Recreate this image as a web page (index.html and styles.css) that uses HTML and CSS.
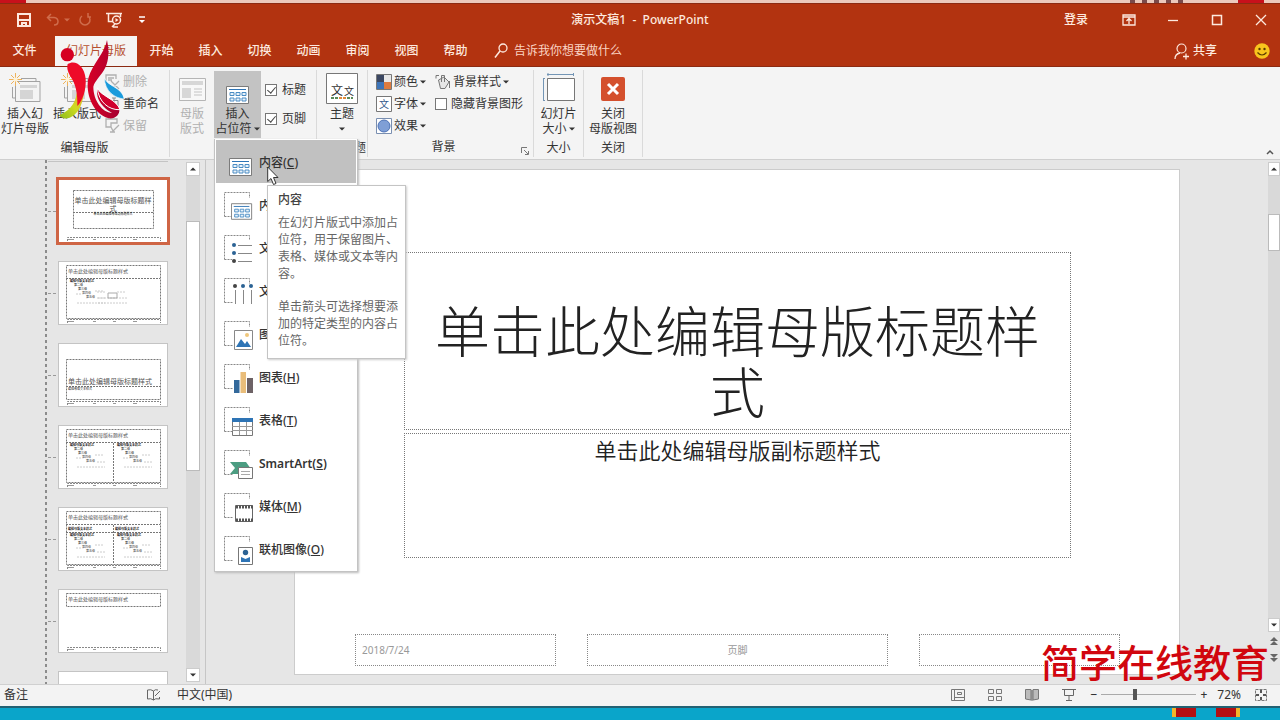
FILE: index.html
```html
<!DOCTYPE html>
<html lang="zh-CN">
<head>
<meta charset="utf-8">
<title>演示文稿1 - PowerPoint</title>
<link rel="stylesheet" href="styles.css">
</head>
<body>
<svg class="defs" aria-hidden="true">
  <symbol id="frame" viewBox="0 0 32 32"><path d="M3.500 26.500V2.500H28.500V8M3.500 26.500H12" fill="none" stroke="#888" stroke-dasharray="2 1"/></symbol>
  <symbol id="content" viewBox="0 0 24 20">
    <path d="M.5 1.500H22.500V18.500H.5Z" fill="#fff" stroke="#7b7b7b"/>
    <path d="M3 4.500H20" stroke="#2e74b5"/>
    <path d="M4 7.500h4v3h-4zM10 7.500h4v3h-4zM16 7.500h4v3h-4zM4 13h4v3h-4zM10 13h4v3h-4zM16 13h4v3h-4z" fill="#e8f2fa" stroke="#4a8cc4"/>
  </symbol>
  <symbol id="slides" viewBox="0 0 32 32">
    <path d="M8 8.500H31V28.500H6.500V12M27 8.500V5.500H12M6.500 25H3.500V14" fill="none" stroke="#a3a3a3"/>
    <path d="M11 12H28V15H11zM11 17H24V26H11z" fill="#d5d5d5"/>
    <path d="M6.500 0V13M0 6.500H13M2 2L11 11M11 2L2 11" stroke="#eeb35b"/><circle cx="6.500" cy="6.500" r="2" fill="#fff3d5"/>
  </symbol>
  <symbol id="caret" viewBox="0 0 6 4"><path d="M0 .5H6L3 3.500Z" fill="currentColor"/></symbol>
  <symbol id="foot" viewBox="0 0 110 64">
    <path d="M9.500 62V58.500H102.500V62" fill="none" stroke="#888" stroke-dasharray="2 1"/>
    <path d="M10 60.500H16M35 60.500H38M55 60.500H58M75 60.500H79" stroke="#999"/>
  </symbol>
  <symbol id="levels" viewBox="0 0 50 30">
    <text x="3" y="5" font-size="3" fill="#111" font-weight="700">编辑母版文本样式</text>
    <text x="7" y="9" font-size="3" fill="#222">第二级</text><text x="11" y="13" font-size="3" fill="#222">第三级</text>
    <text x="15" y="17" font-size="3" fill="#555">第四级</text><text x="19" y="21" font-size="3" fill="#444">第五级</text>
    <path d="M9 17H14M28 14H36M10 26H38M30 21H38" stroke="#ccc" stroke-dasharray="2 1"/>
  </symbol>
</svg>

<div class="app">
  <div class="backdrop-top" aria-hidden="true"><i class="blob"></i><i class="marks"></i><i class="blob"></i></div>

  <header class="titlebar">
    <div class="quick">
      <button aria-label="保存"><svg width="14" height="14" viewBox="0 0 14 14"><path d="M1 1H13V13H1ZM1 7H13M5 13V10H9V13" fill="none" stroke="#fde9df" stroke-width="2"/></svg></button>
      <button class="dim undo" aria-label="撤消"><svg width="14" height="14" viewBox="0 0 14 14"><path d="M5 1L1.500 4.500L5 8M2 4.500H8Q12 5 12 8.500T8 12" fill="none" stroke="currentColor" stroke-width="1.500"/></svg><svg width="6" height="4"><use href="#caret"/></svg></button>
      <button class="dim" aria-label="重复"><svg width="14" height="14" viewBox="0 0 14 14"><path d="M4 3A5 5 0 1 0 10 3M10 0V4H13" fill="none" stroke="currentColor" stroke-width="1.500"/></svg></button>
      <button class="show" aria-label="从头开始"><svg width="17" height="16" viewBox="0 0 17 16"><path d="M0 1.500H16M2.500 2V9.500H7M14.500 2V5M6 15L9 12M7 15H12" fill="none" stroke="#fde9df" stroke-width="1.500"/><circle cx="10.500" cy="8" r="4" fill="none" stroke="#fde9df" stroke-width="1.500"/><path d="M9.500 6L12.500 8L9.500 10Z" fill="#fde9df"/></svg></button>
      <button class="more" aria-label="自定义快速访问工具栏"><svg width="6" height="8" viewBox="0 0 6 8"><path d="M0 1H6" stroke="#fff" stroke-width="1.500"/><path d="M0 4H6L3 7Z" fill="#fff"/></svg></button>
    </div>
    <div class="doc-title">演示文稿1 &nbsp;-&nbsp; PowerPoint</div>
    <div class="window-tools">
      <button>登录</button>
      <button aria-label="功能区显示选项"><svg width="14" height="12" viewBox="0 0 14 12"><path d="M1 1H13V11H1ZM1 3H13M7 10V5M4.500 7L7 4.500L9.500 7" fill="none" stroke="#fde9df" stroke-width="1.300"/></svg></button>
      <button aria-label="最小化"><svg width="12" height="12" viewBox="0 0 12 12"><path d="M1 6.500H11" stroke="#fde9df" stroke-width="1.300"/></svg></button>
      <button aria-label="最大化"><svg width="12" height="12" viewBox="0 0 12 12"><path d="M1.500 1.500H10.500V10.500H1.500Z" fill="none" stroke="#fde9df" stroke-width="1.500"/></svg></button>
      <button aria-label="关闭窗口"><svg width="12" height="12" viewBox="0 0 12 12"><path d="M1 1L11 11M11 1L1 11" stroke="#fde9df" stroke-width="1.300"/></svg></button>
    </div>
  </header>

  <nav class="tabs">
    <button class="file">文件</button><button class="active">幻灯片母版</button><button>开始</button><button>插入</button><button>切换</button><button>动画</button><button>审阅</button><button>视图</button><button>帮助</button>
    <label class="tell"><svg width="14" height="16" viewBox="0 0 14 16"><circle cx="9" cy="5" r="4" fill="none" stroke="currentColor" stroke-width="1.300"/><path d="M6 8L1 14.500" stroke="currentColor" stroke-width="1.500"/></svg><input type="text" placeholder="告诉我你想要做什么" aria-label="告诉我你想要做什么"></label>
    <button class="share"><svg width="16" height="17" viewBox="0 0 16 17"><circle cx="7.500" cy="5.500" r="4.500" fill="none" stroke="currentColor" stroke-width="1.200"/><path d="M1 16Q1 11 6 10M9 13.500H15M12 10.500V16.500" fill="none" stroke="currentColor" stroke-width="1.300"/></svg>共享</button>
    <button class="smile" aria-label="反馈"><svg width="16" height="16" viewBox="0 0 16 16"><circle cx="8" cy="8" r="7.700" fill="#f8c51d"/><circle cx="5.500" cy="6" r="1.200" fill="#5b3c00"/><circle cx="10.500" cy="6" r="1.200" fill="#5b3c00"/><path d="M3.500 9.500Q8 14.500 12.500 9.500" fill="none" stroke="#5b3c00" stroke-width="1.200"/></svg></button>
  </nav>

  <section class="ribbon" aria-label="幻灯片母版">
    <div class="group edit">
      <div class="tools">
        <button class="big"><svg width="32" height="32"><use href="#slides"/></svg>插入幻<br>灯片母版</button>
        <button class="big"><svg width="32" height="32"><use href="#slides"/></svg>插入版式</button>
        <div class="stack">
          <button class="row off"><svg width="16" height="16" viewBox="0 0 16 16"><path d="M1 9V1H11V5M3 4H9M3 6H7M6 7L14 15M14 7L6 15" fill="none" stroke="currentColor" stroke-width="1.300"/></svg>删除</button>
          <button class="row"><svg width="16" height="16" viewBox="0 0 16 16"><path d="M1 4.500H13V12.500H1ZM9 2V15M7 2H11M7 15H11" fill="none" stroke="#888"/></svg>重命名</button>
          <button class="row off"><svg width="16" height="16" viewBox="0 0 16 16"><path d="M1 9V1H12V5H6V9ZM8 13L6 9M8 13L14 7M5 14H10" fill="none" stroke="currentColor" stroke-width="1.300"/></svg>保留</button>
        </div>
      </div>
      <h2>编辑母版</h2>
    </div>
    <div class="group layout">
      <div class="tools">
        <button class="big off"><svg width="30" height="32" viewBox="0 0 30 32"><path d="M2.500 5.500H28.500V27.500H2.500Z" fill="#f8f8f8" stroke="#b5b5b5"/><path d="M5 8H26V12H5zM5 15H14V25H5z" fill="#d7d7d7"/><path d="M17 16H25M17 19H25M17 22H25" stroke="#c4c4c4"/></svg>母版<br>版式</button>
        <div class="drop">
          <button class="big pressed" aria-expanded="true"><svg width="24" height="32" viewBox="0 0 24 32"><use href="#content" y="12" width="24" height="20"/></svg>插入<br>占位符 <svg class="car" width="6" height="4"><use href="#caret"/></svg></button>
          <div class="menu" role="menu">
            <button role="menuitem" class="hover"><svg width="30" height="32"><use href="#content" x="6" y="10" width="24" height="20"/></svg><span>内容(<u>C</u>)</span></button>
            <button role="menuitem"><svg width="30" height="32" viewBox="2 0 30 32"><use href="#frame" width="32" height="32"/><use href="#content" x="10" y="12" width="22" height="19"/></svg><span>内</span></button>
            <button role="menuitem"><svg width="30" height="32" viewBox="2 0 30 32"><use href="#frame" width="32" height="32"/><path d="M11 7H32V31H11Z" fill="#fff"/><path d="M17 12.500H31M17 20.500H31M17 28.500H31" stroke="#888"/><circle cx="13" cy="12" r="2" fill="#2b6294"/><circle cx="13" cy="20" r="2" fill="#2b6294"/><circle cx="13" cy="28" r="2" fill="#444"/></svg><span>文</span></button>
            <button role="menuitem"><svg width="30" height="32" viewBox="2 0 30 32"><use href="#frame" width="32" height="32"/><path d="M14.500 14V28M22.500 14V28M30.500 14V28" stroke="#888"/><circle cx="14" cy="10" r="2" fill="#444"/><circle cx="22" cy="10" r="2" fill="#2b6294"/><circle cx="30" cy="10" r="2" fill="#2b6294"/></svg><span>文</span></button>
            <button role="menuitem"><svg width="30" height="32" viewBox="2 0 30 32"><use href="#frame" width="32" height="32"/><path d="M13.500 11.500H31.500V30.500H13.500Z" fill="#fff" stroke="#888"/><path d="M15 28L20 20L24 25L26 22L30 28Z" fill="#2e74b5"/><circle cx="26" cy="16" r="2" fill="#efc77c"/></svg><span>图</span></button>
            <button role="menuitem"><svg width="30" height="32" viewBox="2 0 30 32"><use href="#frame" width="32" height="32"/><path d="M13 18H18.500V31H13z" fill="#33699b"/><path d="M19.500 10H25V31H19.500z" fill="#e9bd7a"/><path d="M26 16H32V31H26z" fill="#6d6266"/></svg><span>图表(<u>H</u>)</span></button>
            <button role="menuitem"><svg width="30" height="32" viewBox="2 0 30 32"><use href="#frame" width="32" height="32"/><path d="M11.500 13.500H31.500V30.500H11.500Z" fill="#fff" stroke="#777"/><path d="M11 13H32V17H11z" fill="#2e74b5"/><path d="M11 21.500H32M11 25.500H32M18.500 17V30M25.500 17V30" stroke="#999"/></svg><span>表格(<u>T</u>)</span></button>
            <button role="menuitem" class="latin"><svg width="30" height="32" viewBox="2 0 30 32"><use href="#frame" width="32" height="32"/><path d="M9 14H25L30 21L25 26H9L14 20Z" fill="#4c9d82"/><path d="M17.500 19.500H31.500V30.500H17.500Z" fill="#fff" stroke="#777"/><path d="M20 23.500H29M20 26.500H29" stroke="#aaa"/></svg><span>SmartArt(<u>S</u>)</span></button>
            <button role="menuitem"><svg width="30" height="32" viewBox="2 0 30 32"><use href="#frame" width="32" height="32"/><path d="M14.500 14.500H31.500V30.500H14.500Z" fill="#fff" stroke="#666"/><path d="M15 16H32M15 29H32" stroke="#555" stroke-width="3" stroke-dasharray="2 1"/></svg><span>媒体(<u>M</u>)</span></button>
            <button role="menuitem"><svg width="30" height="32" viewBox="2 0 30 32"><use href="#frame" width="32" height="32"/><path d="M17.500 13.500H31.500V30.500H17.500Z" fill="#fff" stroke="#777"/><circle cx="24.500" cy="18.500" r="2.700" fill="#2b6294"/><path d="M20 23L24.500 25L29 23V28H20Z" fill="#2e74b5"/></svg><span>联机图像(<u>O</u>)</span></button>
            <div class="tip" role="tooltip"><strong>内容</strong><p>在幻灯片版式中添加占位符，用于保留图片、表格、媒体或文本等内容。</p><p>单击箭头可选择想要添加的特定类型的内容占位符。</p></div>
            <svg class="cursor" width="12" height="20" viewBox="0 0 12 20"><path d="M.7 1V15.500L4 12.500L6.500 18.500L9 17.500L6.500 11.500H11Z" fill="#fff" stroke="#333"/></svg>
          </div>
        </div>
        <div class="checks">
          <label><input type="checkbox" checked>标题</label>
          <label><input type="checkbox" checked>页脚</label>
        </div>
      </div>
    </div>
    <div class="group theme">
      <div class="tools"><button class="big"><svg width="32" height="32" viewBox="0 0 32 32"><path d="M.5 .5H31.500V30.500H.5Z" fill="#fff" stroke="#777"/><text x="5" y="22" font-size="12" fill="#333">文</text><text x="18" y="22" font-size="10" fill="#333">文</text><path d="M5 25H27" stroke="#5a8a5a" stroke-width="2" stroke-dasharray="3 1"/><path d="M13 25H20" stroke="#e08a3a" stroke-width="2" stroke-dasharray="3 1"/></svg>主题<br><svg class="car" width="6" height="4"><use href="#caret"/></svg></button></div>
      <h2>编辑主题</h2>
    </div>
    <div class="group background">
      <div class="tools">
        <div class="stack">
          <button class="row"><svg width="16" height="16" viewBox="0 0 16 16"><path d="M1 1H8V8H1z" fill="#3b4762"/><path d="M8 1H15V8H8z" fill="#e8e8e8"/><path d="M1 8H8V15H1z" fill="#3d74b8"/><path d="M8 8H15V15H8z" fill="#dd7b3f"/><path d="M.5 .5H15.500V15.500H.5Z" fill="none" stroke="#777"/></svg>颜色<svg class="car" width="6" height="4"><use href="#caret"/></svg></button>
          <button class="row"><svg width="16" height="16" viewBox="0 0 16 16"><path d="M.5 .5H15.500V15.500H.5Z" fill="#fff" stroke="#777"/><text x="3" y="12" font-size="10" fill="#335a8c">文</text></svg>字体<svg class="car" width="6" height="4"><use href="#caret"/></svg></button>
          <button class="row"><svg width="16" height="16" viewBox="0 0 16 16"><path d="M.5 .5H15.500V15.500H.5Z" fill="#fff" stroke="#7a8fb0"/><circle cx="8" cy="8" r="6" fill="#7f9fd6" stroke="#4c71b5"/></svg>效果<svg class="car" width="6" height="4"><use href="#caret"/></svg></button>
        </div>
        <div class="stack">
          <button class="row"><svg width="16" height="16" viewBox="0 0 16 16"><path d="M3.500 6L9 3L14 8L10 14.500H5.500Z" fill="#e6e6e6" stroke="#777"/><path d="M6.500 8V1.500H9.500V8M1 4.500V1.500H4M14.500 7V14" fill="none" stroke="#777"/></svg>背景样式<svg class="car" width="6" height="4"><use href="#caret"/></svg></button>
          <label class="row"><input type="checkbox">隐藏背景图形</label>
        </div>
      </div>
      <h2>背景</h2>
      <button class="launcher" aria-label="背景格式"><svg width="8" height="8" viewBox="0 0 8 8"><path d="M.5 6V.5H6M3 3L7 7M7.500 4V7.500H4" fill="none" stroke="#777"/></svg></button>
    </div>
    <div class="group size">
      <div class="tools"><button class="big"><svg width="32" height="32" viewBox="0 0 32 32"><path d="M4.500 5.500H31.500V27.500H4.500Z" fill="#fff" stroke="#777"/><path d="M4 1.500H31M5 0V3M30.500 0V3M.5 6V27M0 5.500H2M0 27.500H2" stroke="#7395b5"/></svg>幻灯片<br>大小 <svg class="car" width="6" height="4"><use href="#caret"/></svg></button></div>
      <h2>大小</h2>
    </div>
    <div class="group close">
      <div class="tools"><button class="big"><svg width="24" height="32" viewBox="0 0 24 32"><rect y="4" width="24" height="24" rx="2" fill="#d4502d"/><path d="M7 11L17 21M17 11L7 21" stroke="#fff" stroke-width="3"/></svg>关闭<br>母版视图</button></div>
      <h2>关闭</h2>
    </div>
    <button class="collapse" aria-label="折叠功能区"><svg width="8" height="6" viewBox="0 0 8 6"><path d="M1 5L4 2L7 5" fill="none" stroke="#555" stroke-width="1.500"/></svg></button>
  </section>

  <main class="work">
    <aside class="thumbs">
      <div class="list">
        <div class="master"></div>
        <button class="thumb selected" aria-label="标题幻灯片 版式"><svg viewBox="0 0 110 64"><path d="M15.500 11.500H95.500V49.500H15.500ZM15 33.500H96" fill="none" stroke="#777" stroke-dasharray="2 1"/><text x="55" y="24" font-size="7" text-anchor="middle" fill="#555">单击此处编辑母版标题样</text><text x="55" y="32" font-size="7" text-anchor="middle" fill="#555">式</text><text x="55" y="36" font-size="3" text-anchor="middle" fill="#111">单击此处编辑母版副标题样式</text><use href="#foot"/></svg></button>
        <button class="thumb" aria-label="标题和内容 版式"><svg viewBox="0 0 110 64"><path d="M8.500 4.500H102.500V57.500H8.500ZM8 17.500H102" fill="none" stroke="#777" stroke-dasharray="2 1"/><text x="10" y="12" font-size="5" fill="#555">单击此处编辑母版标题样式</text><use href="#levels" x="9" y="16" width="50" height="30"/><path d="M39 31H48M59 31H68M40 42H70M40 37H70" stroke="#ccc" stroke-dasharray="2 1"/><path d="M50 32H59V37H50Z" fill="none" stroke="#aaa"/><use href="#foot"/></svg></button>
        <button class="thumb" aria-label="节标题 版式"><svg viewBox="0 0 110 64"><path d="M8.500 16.500H102.500V56.500H8.500ZM8 43.500H102" fill="none" stroke="#777" stroke-dasharray="2 1"/><text x="10" y="41" font-size="7" fill="#555">单击此处编辑母版标题样式</text><text x="10" y="47" font-size="3" fill="#222">编辑母版文本样式</text><use href="#foot"/></svg></button>
        <button class="thumb" aria-label="两栏内容 版式"><svg viewBox="0 0 110 64"><path d="M8.500 4.500H102.500V57.500H8.500ZM8 17.500H102M55.500 18V57" fill="none" stroke="#777" stroke-dasharray="2 1"/><text x="10" y="12" font-size="5" fill="#555">单击此处编辑母版标题样式</text><use href="#levels" x="9" y="16" width="50" height="30"/><use href="#levels" x="56" y="16" width="50" height="30"/><use href="#foot"/></svg></button>
        <button class="thumb" aria-label="比较 版式"><svg viewBox="0 0 110 64"><path d="M8.500 4.500H102.500V57.500H8.500ZM8 17.500H102M8 25.500H102M55.500 18V57" fill="none" stroke="#777" stroke-dasharray="2 1"/><text x="10" y="12" font-size="5" fill="#555">单击此处编辑母版标题样式</text><text x="10" y="23" font-size="3" font-weight="700" fill="#111">编辑母版文本样式</text><text x="57" y="23" font-size="3" font-weight="700" fill="#111">编辑母版文本样式</text><use href="#levels" x="9" y="24" width="50" height="30"/><use href="#levels" x="56" y="24" width="50" height="30"/><use href="#foot"/></svg></button>
        <button class="thumb" aria-label="仅标题 版式"><svg viewBox="0 0 110 64"><path d="M8.500 4.500H102.500V17.500H8.500Z" fill="none" stroke="#777" stroke-dasharray="2 1"/><text x="10" y="12" font-size="5" fill="#555">单击此处编辑母版标题样式</text><use href="#foot"/></svg></button>
        <button class="thumb" aria-label="空白 版式"><svg viewBox="0 0 110 64"><use href="#foot"/></svg></button>
      </div>
      <div class="scroll left"><button aria-label="向上滚动"><svg class="flip" width="6" height="4"><use href="#caret"/></svg></button><div class="track"><i></i></div><button aria-label="向下滚动"><svg width="6" height="4"><use href="#caret"/></svg></button></div>
    </aside>
    <section class="canvas">
      <article class="slide">
        <h1>单击此处编辑母版标题样式</h1>
        <p class="subtitle">单击此处编辑母版副标题样式</p>
        <footer><div>2018/7/24</div><div class="mid">页脚</div><div></div></footer>
      </article>
    </section>
    <div class="scroll right"><button aria-label="向上滚动"><svg class="flip" width="6" height="4"><use href="#caret"/></svg></button><div class="track"><i></i></div><button aria-label="向下滚动"><svg width="6" height="4"><use href="#caret"/></svg></button>
      <button class="page" aria-label="上一张"><svg width="8" height="8" viewBox="0 0 8 8"><path d="M0 4L4 0L8 4ZM0 8L4 4L8 8Z" fill="#666"/></svg></button><button class="page" aria-label="下一张"><svg width="8" height="8" viewBox="0 0 8 8"><path d="M0 0L4 4L8 0ZM0 4L4 8L8 4Z" fill="#666"/></svg></button></div>
  </main>

  <footer class="status">
    <button class="notes">备注</button>
    <button class="proof" aria-label="拼写检查"><svg width="14" height="12" viewBox="0 0 14 12"><path d="M6.500 11V2Q4 0 .5 1V10Q4 9 6.500 11Q8 9 12.500 10V8M6.500 2Q8 0 11 1M8 7L13 2" fill="none" stroke="#666"/></svg></button>
    <button>中文(中国)</button>
    <div class="views">
      <button aria-label="普通视图"><svg width="14" height="14" viewBox="0 0 14 14"><path d="M.5 1.500H13.500V12.500H.5ZM3.500 1V12M3 9.500H13M6.500 4.500H10.500V6.500H6.500Z" fill="none" stroke="#777"/></svg></button>
      <button aria-label="幻灯片浏览"><svg width="14" height="14" viewBox="0 0 14 14"><path d="M.5 1.500H5.500V5.500H.5ZM8.500 1.500H13.500V5.500H8.500ZM.5 8.500H5.500V12.500H.5ZM8.500 8.500H13.500V12.500H8.500Z" fill="none" stroke="#777"/></svg></button>
      <button aria-label="阅读视图"><svg width="14" height="14" viewBox="0 0 14 14"><path d="M.5 1.500H6V12L.5 11ZM13.500 1.500H8V12L13.500 11Z" fill="#bbb" stroke="#777"/><path d="M7 2V13" stroke="#666"/></svg></button>
      <button aria-label="幻灯片放映"><svg width="14" height="14" viewBox="0 0 14 14"><path d="M0 1.500H14M2.500 2V7.500H11.500V2M7 8V12M4 12.500H10" fill="none" stroke="#666"/></svg></button>
    </div>
    <div class="zoom">
      <button aria-label="缩小">−</button><input type="range" min="0" max="100" value="35" aria-label="缩放"><button aria-label="放大">+</button><button class="percent">72%</button>
      <button aria-label="适应窗口"><svg width="14" height="14" viewBox="0 0 14 14"><path d="M1.500 1.500H12.500V12.500H1.500Z" fill="none" stroke="#777" stroke-dasharray="3 1"/><path d="M7 2V5M7 9V12M2 7H5M9 7H12" stroke="#555" stroke-width="2"/></svg></button>
    </div>
  </footer>
  <div class="backdrop-bottom" aria-hidden="true"><i></i><i></i></div>

  <svg class="logo" viewBox="0 0 255 330" aria-hidden="true">
    <defs><linearGradient id="lime" x1="0" y1="1" x2="1" y2="0"><stop offset="0" stop-color="#8dbb1c"/><stop offset=".5" stop-color="#cddb20"/><stop offset="1" stop-color="#f0a12a"/></linearGradient><linearGradient id="crimson" x1="0" y1="0" x2="1" y2="0"><stop offset="0" stop-color="#d70025"/><stop offset="1" stop-color="#a60032"/></linearGradient></defs>
    <circle cx="52" cy="74" r="20" fill="#d60022"/>
    <path d="M80 190C76 225 52 246 27 256C36 267 52 269 67 259C88 246 98 222 103 180Z" fill="url(#lime)"/>
    <path d="M53 102C75 88 103 106 107 146C109 178 99 210 82 228C83 190 78 163 60 137C52 123 50 111 53 102Z" fill="#ee0b28"/>
    <path d="M171 30C165 70 127 100 115 145C106 188 126 250 176 265C195 268 210 254 208 238C175 231 150 210 143 174C137 195 145 225 186 249C157 247 130 212 130 170C140 135 190 122 171 30Z" fill="url(#crimson)"/>
    <path d="M142 173C150 198 200 207 210 239C177 241 145 216 142 173Z" fill="#d0002d" stroke="#fff" stroke-width="3"/>
    <path d="M163 143C172 170 216 170 223 207C195 205 164 185 163 143Z" fill="#1a9bdc" stroke="#fff" stroke-width="2"/>
  </svg>
  <div class="watermark">简学在线教育</div>
</div>
</body>
</html>
```
FILE: styles.css
```css
* { box-sizing: border-box; }
body { margin: 0; font: 12px/16px "Noto Sans", "Noto Sans CJK SC", sans-serif; color: #333; }
button, input { font: inherit; color: inherit; }
button { border: 0; padding: 0; margin: 0; background: none; white-space: nowrap; }
svg { display: block; flex: none; }
.defs { display: none; }
.app { position: relative; display: flex; flex-direction: column; height: 100vh; overflow: hidden; background: #e6e6e6; }

.backdrop-top { display: flex; height: 3px; padding-right: 16px; background: #ecc9bc; }
.backdrop-top i { width: 26px; background: #c8101c; }
.backdrop-top .marks { width: 60px; margin: 0 48px 0 auto; background: repeating-linear-gradient(90deg, #7a4a4a 0 5px, #ecc9bc 5px 12px); }

.titlebar { display: grid; grid-template-columns: 1fr auto 1fr; align-items: center; height: 33px; padding-bottom: 1px; background: #b23310; color: #fde9df; border-top: 1px solid #8c2a12; font-weight: 500; }
.quick { display: flex; align-items: center; padding-left: 17px; }
.quick .undo { display: flex; align-items: center; gap: 4px; margin-left: 15px; }
.quick .dim { color: #cf6c4c; }
.quick .undo + .dim { margin-left: 8px; }
.quick .show { margin-left: 14px; }
.quick .more { margin-left: 16px; }
.window-tools { display: flex; justify-content: flex-end; }
.window-tools button { display: flex; justify-content: center; align-items: center; width: 44px; height: 31px; }
.window-tools button:first-child { width: 62px; }
.window-tools button:last-child { margin-right: -3px; }

.tabs { display: flex; height: 31px; background: #b23310; color: #fde9df; border-bottom: 1px solid #8c2a12; }
.tabs button { width: 49px; font-weight: 500; }
.tabs .file { margin-right: 6px; }
.tabs .active { width: 82px; background: #f5f4f3; color: #b5502f; font-weight: 400; }
.tell { display: flex; align-items: center; gap: 6px; margin-left: 14px; }
.tell input { width: 140px; border: 0; padding: 0; background: none; outline: 0; }
.tell input::placeholder { color: #fbd3c3; opacity: 1; }
.tabs .share { display: flex; align-items: center; gap: 3px; width: auto; margin-left: auto; }
.tabs .smile { display: flex; align-items: center; width: auto; margin: 0 10px 0 37px; }

.ribbon { position: relative; z-index: 2; display: flex; height: 93px; padding-top: 3px; background: #f4f4f4; border-bottom: 1px solid #cfcfcf; }
.group { position: relative; display: flex; flex-direction: column; border-right: 1px solid #dadada; margin-bottom: 2px; }
.group h2 { margin: 0; font-size: 12px; line-height: 20px; font-weight: 400; text-align: center; }
.tools { display: flex; height: 69px; padding-top: 1px; }
.edit { width: 170px; } .layout { width: 147px; z-index: 1; } .theme { width: 51px; } .background { width: 166px; } .size { width: 50px; } .close { width: 59px; }
.big { width: 50px; height: 67px; line-height: 15px; padding-bottom: 0; }
.big > svg:first-child { margin: 0 auto 1px; }
.tools .big { padding: 2px 0; }
.big .car { display: inline-block; vertical-align: 2px; }
.size .big .car, .pressed .car { margin-left: -1px; }
.close .big { width: 58px; }
.off { color: #b0b0b0; }
.edit .big + .big { height: 52px; margin-left: 2px; }
.stack { display: flex; flex-direction: column; }
.edit .stack { margin-left: 3px; }
.row { display: flex; align-items: center; gap: 2px; height: 22px; }
.background .tools { padding-left: 8px; gap: 9px; }
.background h2 { padding-right: 14px; }
.layout .big { width: 44px; }
.layout .pressed { width: 47px; background: #c3c3c3; }
.drop { position: relative; }
.checks { padding: 4px 0 0 4px; }
.checks label { display: flex; align-items: center; gap: 5px; height: 29px; }
.row input, .checks input { appearance: none; width: 12px; height: 12px; margin: 0; border: 1px solid #777; background: #fff; }
.row input { margin-right: 2px; }
.checks input:checked::before { content: ""; display: block; width: 4px; height: 7px; margin: 0 auto; border: solid #444; border-width: 0 1px 1px 0; transform: rotate(40deg); }
.launcher { position: absolute; right: 4px; bottom: 2px; }
.collapse { margin: auto 6px 4px auto; }

.menu { position: absolute; top: 68px; left: 0; width: 144px; padding: 1px; background: #fff; border: 1px solid #c3c3c3; border-top: 0; box-shadow: 1px 1px 2px #bbb; }
.menu button { display: flex; align-items: center; gap: 6px; width: 100%; height: 43px; padding: 3px 0 0 7px; font-weight: 500; }
.menu .latin { font-weight: 600; }
.menu .hover { background: #c1c1c1; }
.tip { position: absolute; left: 52px; top: 46px; width: 139px; min-height: 172px; padding: 6px 7px 9px 10px; background: #fff; border: 1px solid #c4c4c4; box-shadow: 1px 1px 2px #ccc; color: #666; }
.tip strong { display: block; font-weight: 500; color: #444; margin-bottom: 6px; }
.tip p { margin: 0 0 16px; line-height: 17px; }
.tip p:last-child { margin: 0; }
.cursor { position: absolute; left: 52px; top: 27px; }

.work { flex: 1; min-height: 0; display: flex; }
.thumbs { width: 206px; display: flex; justify-content: space-between; border-right: 1px solid #c6c6c6; overflow: hidden; }
.list { flex: 1; margin-left: 45px; padding-left: 3px; overflow: hidden; background: repeating-linear-gradient(#8c8c8c 0 3px, #e6e6e6 3px 6px) left / 2px 100% no-repeat; }
.master { height: 2px; margin: 0 18px 17px 0; border-bottom: 1px solid #c4c4c4; }
.thumb { position: relative; display: block; width: 110px; margin: 0 0 18px 10px; background: #fff; outline: 1px solid #c4c4c4; outline-offset: -1px; }
.thumb::before { content: ""; position: absolute; left: -10px; top: 50%; width: 8px; border-top: 1px dashed #999; }
.thumb.selected { outline: 3px solid #cf6545; outline-offset: -1px; }
.scroll { display: flex; flex-direction: column; width: 14px; padding: 2px 0; }
.scroll button { display: flex; align-items: center; justify-content: center; height: 14px; background: #fff; border: 1px solid #ccc; }
.scroll.left { margin-right: 5px; }
.track { flex: 1; display: flex; flex-direction: column; background: #d9d9d9; }
.track i { background: #fff; border: 1px solid #bbb; }
.left .track { padding-top: 45px; } .left .track i { height: 56%; }
.flip { transform: rotate(180deg); }
.canvas { flex: 1; padding: 9px 88px; display: flex; }
.scroll.right { width: 12px; padding-bottom: 18px; }
.right .track { padding-top: 38px; } .right .track i { height: 37px; }
.scroll .page { background: none; border: 0; height: 17px; }
.slide { flex: 1; display: flex; flex-direction: column; padding: 82px 59px 9px 60px; background: #fff; border: 1px solid #ccc; }
.slide h1, .subtitle { margin: 0 49px; border: 1px dotted #777; text-align: center; color: #222; }
.slide h1 { padding: 45px 20px 9px; font: 300 55px/61px "Noto Sans CJK SC", sans-serif; }
.subtitle { flex: 0 1 125px; margin-top: 3px; font: 350 22px/30px "Noto Sans CJK SC", sans-serif; }
.slide footer { display: grid; grid-template-columns: 2fr 3fr 2fr; gap: 31px; margin-top: auto; height: 31px; font-size: 10px; line-height: 30px; color: #999; }
.slide footer div { border: 1px dotted #888; padding: 0 6px; }
.slide footer .mid { text-align: center; }

.status { display: flex; align-items: center; height: 22px; padding: 0 12px 2px 4px; background: #f3f3f3; border-top: 1px solid #d0d0d0; }
.proof { margin: 0 16px 0 119px; }
.views { display: flex; gap: 23px; margin-left: auto; }
.zoom { display: flex; align-items: center; margin-left: 15px; font-weight: 500; }
.zoom input { appearance: none; width: 95px; height: 12px; margin: 0 4px; background: linear-gradient(#aaa, #aaa) center / 100% 1px no-repeat; }
.zoom input::-webkit-slider-thumb { appearance: none; width: 4px; height: 11px; background: #555; }
.percent { margin: 0 13px 0 10px; font-weight: 400; }
.backdrop-bottom { display: flex; justify-content: flex-end; gap: 20px; height: 14px; padding-right: 40px; background: #0aa5ca; border-top: 2px solid #226173; }
.backdrop-bottom i { width: 24px; height: 9px; background: #b30f12; border-left: 4px solid #f2b52a; }
.backdrop-bottom i:last-child { border-left: 0; border-right: 4px solid #f2b52a; }

.logo { position: absolute; z-index: 3; left: 50px; top: 30px; width: 85px; height: 110px; }
.watermark { position: absolute; z-index: 3; right: 11px; bottom: 36px; font: 500 38px/46px "Noto Sans CJK SC", sans-serif; color: #d1060e; }
```
